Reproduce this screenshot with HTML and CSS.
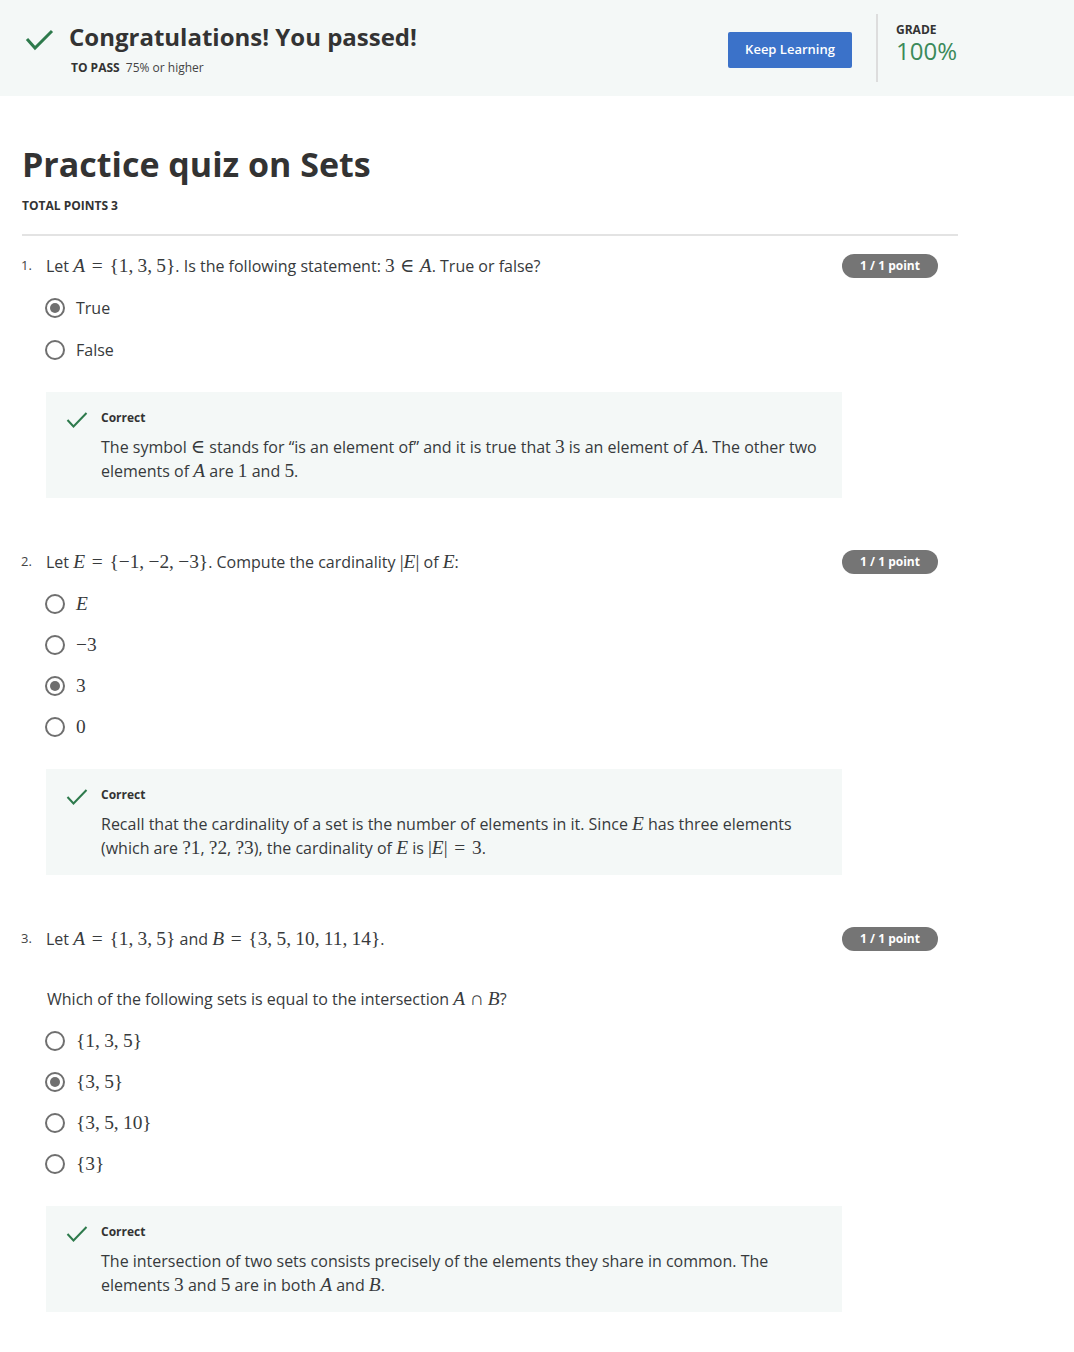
FILE: index.html
```html
<!DOCTYPE html>
<html>
<head>
<meta charset="utf-8">
<link rel="stylesheet" href="styles.css">
</head>
<body>
<header class="banner">
  <div class="banner-left">
    <svg class="big-check" width="30" height="24" viewBox="0 0 30 24"><path d="M2 11 L10 20 L27 3" fill="none" stroke="#2d7a4c" stroke-width="3"/></svg>
    <div>
      <h1 class="banner-title">Congratulations! You passed!</h1>
      <div class="topass"><b>TO PASS</b> 75% or higher</div>
    </div>
  </div>
  <div class="banner-right">
    <button class="keep">Keep Learning</button>
    <div class="vdiv"></div>
    <div class="grade">
      <div class="grade-label">GRADE</div>
      <div class="grade-value">100%</div>
    </div>
  </div>
</header>

<main class="page">
  <h2 class="quiz-title">Practice quiz on Sets</h2>
  <div class="total">TOTAL POINTS 3</div>
  <hr class="rule">

  <section class="q">
    <div class="q-head">
      <span class="q-num">1.</span>
      <div class="q-text">Let <span class="m"><i>A</i><span class="rel">=</span>{1,<span class="th"></span>3,<span class="th"></span>5}</span>. Is the following statement: <span class="m">3<span class="rel">∈</span><i>A</i></span>. True or false?</div>
      <span class="badge">1 / 1 point</span>
    </div>
    <div class="opts">
      <div class="opt"><span class="radio on"></span><span>True</span></div>
      <div class="opt"><span class="radio"></span><span>False</span></div>
    </div>
    <div class="fb">
      <svg class="fb-check" width="22" height="16" viewBox="0 0 22 16"><path d="M1.5 8 L7.5 14.5 L20.5 1" fill="none" stroke="#2d7a4c" stroke-width="2"/></svg>
      <div>
        <div class="fb-title">Correct</div>
        <div class="fb-text">The symbol <span class="m">∈</span> stands for “is an element of” and it is true that <span class="m">3</span> is an element of <span class="m"><i>A</i></span>. The other two elements of <span class="m"><i>A</i></span> are <span class="m">1</span> and <span class="m">5</span>.</div>
      </div>
    </div>
  </section>

  <section class="q">
    <div class="q-head">
      <span class="q-num">2.</span>
      <div class="q-text">Let <span class="m"><i>E</i><span class="rel">=</span>{−1,<span class="th"></span>−2,<span class="th"></span>−3}</span>. Compute the cardinality <span class="m">|<i>E</i>|</span> of <span class="m"><i>E</i></span>:</div>
      <span class="badge">1 / 1 point</span>
    </div>
    <div class="opts tight">
      <div class="opt"><span class="radio"></span><span class="m"><i>E</i></span></div>
      <div class="opt"><span class="radio"></span><span class="m">−3</span></div>
      <div class="opt"><span class="radio on"></span><span class="m">3</span></div>
      <div class="opt"><span class="radio"></span><span class="m">0</span></div>
    </div>
    <div class="fb">
      <svg class="fb-check" width="22" height="16" viewBox="0 0 22 16"><path d="M1.5 8 L7.5 14.5 L20.5 1" fill="none" stroke="#2d7a4c" stroke-width="2"/></svg>
      <div>
        <div class="fb-title">Correct</div>
        <div class="fb-text">Recall that the cardinality of a set is the number of elements in it. Since <span class="m"><i>E</i></span> has three elements (which are <span class="m">?1</span>, <span class="m">?2</span>, <span class="m">?3</span>), the cardinality of <span class="m"><i>E</i></span> is <span class="m">|<i>E</i>|<span class="rel">=</span>3</span>.</div>
      </div>
    </div>
  </section>

  <section class="q">
    <div class="q-head">
      <span class="q-num">3.</span>
      <div class="q-text">Let <span class="m"><i>A</i><span class="rel">=</span>{1,<span class="th"></span>3,<span class="th"></span>5}</span> and <span class="m"><i>B</i><span class="rel">=</span>{3,<span class="th"></span>5,<span class="th"></span>10,<span class="th"></span>11,<span class="th"></span>14}</span>.</div>
      <span class="badge">1 / 1 point</span>
    </div>
    <div class="q-sub">Which of the following sets is equal to the intersection <span class="m"><i>A</i><span class="bin">∩</span><i>B</i></span>?</div>
    <div class="opts tight">
      <div class="opt"><span class="radio"></span><span class="m">{1,<span class="th"></span>3,<span class="th"></span>5}</span></div>
      <div class="opt"><span class="radio on"></span><span class="m">{3,<span class="th"></span>5}</span></div>
      <div class="opt"><span class="radio"></span><span class="m">{3,<span class="th"></span>5,<span class="th"></span>10}</span></div>
      <div class="opt"><span class="radio"></span><span class="m">{3}</span></div>
    </div>
    <div class="fb">
      <svg class="fb-check" width="22" height="16" viewBox="0 0 22 16"><path d="M1.5 8 L7.5 14.5 L20.5 1" fill="none" stroke="#2d7a4c" stroke-width="2"/></svg>
      <div>
        <div class="fb-title">Correct</div>
        <div class="fb-text">The intersection of two sets consists precisely of the elements they share in common. The elements <span class="m">3</span> and <span class="m">5</span> are in both <span class="m"><i>A</i></span> and <span class="m"><i>B</i></span>.</div>
      </div>
    </div>
  </section>
</main>
</body>
</html>
```

FILE: styles.css
```css
* { box-sizing: border-box; }
body {
  margin: 0;
  font-family: "Open Sans", "Liberation Sans", sans-serif;
  color: #373a3c;
  background: #fff;
}
.banner {
  height: 96px;
  background: #f4f8f7;
  display: flex;
  justify-content: space-between;
  align-items: flex-start;
}
.banner-left {
  display: flex;
  align-items: flex-start;
  padding: 21px 0 0 25px;
}
.big-check { margin: 7px 14px 0 0; flex: none; }
.banner-title {
  margin: 0;
  font-size: 24px;
  line-height: 32px;
  font-weight: 700;
  color: #333;
}
.topass {
  margin-top: 7px;
  font-size: 12px;
  line-height: 16px;
  color: #444;
  padding-left: 2px;
}
.topass b { font-weight: 700; color: #333; margin-right: 3px; }
.banner-right {
  display: flex;
  align-items: flex-start;
  width: 346px;
  padding-top: 14px;
}
.keep {
  margin-top: 18px;
  width: 124px;
  height: 36px;
  background: #3b72c9;
  border: none;
  border-radius: 2px;
  color: #fff;
  font-family: "Open Sans", "Liberation Sans", sans-serif;
  font-size: 13px;
  font-weight: 600;
  padding: 0 0 2px;
}
.vdiv {
  width: 2px;
  height: 68px;
  background: #ddd;
  margin-left: 24px;
}
.grade { margin-left: 18px; padding-top: 8px; }
.grade-label {
  font-size: 12px;
  font-weight: 700;
  line-height: 16px;
  color: #333;
}
.grade-value {
  font-size: 24px;
  line-height: 28px;
  color: #3b8a5a;
  font-weight: 400;
  margin-top: -1px;
}
.page { padding: 0 116px 30px 22px; }
.quiz-title {
  margin: 46px 0 0;
  font-size: 34px;
  line-height: 44px;
  font-weight: 700;
  color: #333;
}
.total {
  margin-top: 12px;
  font-size: 12px;
  line-height: 16px;
  font-weight: 700;
  color: #333;
}
.rule {
  border: none;
  height: 2px;
  background: #e3e3e3;
  margin: 20px 0 0;
}
.q { padding-top: 18px; margin-bottom: 34px; }
.q:last-of-type { margin-bottom: 0; }
.q-head {
  display: flex;
  align-items: flex-start;
  padding-right: 20px;
}
.q-num {
  width: 25px;
  font-size: 13px;
  line-height: 22px;
  color: #444;
  margin-left: -1px;
}
.q-text {
  flex: 1;
  font-size: 16px;
  line-height: 24px;
  color: #373a3c;
}
.q-sub {
  margin: 36px 0 0 25px;
  font-size: 16px;
  line-height: 24px;
}
.m {
  font-family: "Liberation Serif", "DejaVu Serif", serif;
  font-size: 19.4px;
  line-height: 1;
}
.m i { font-style: italic; }
.rel {
  display: inline-block;
  min-width: 0.7em;
  text-align: center;
  margin: 0 0.2777em;
}
.bin { margin: 0 0.2222em; }
.th { display: inline-block; width: 0.22em; }
.badge {
  flex: none;
  height: 24px;
  border-radius: 12px;
  background: #757575;
  color: #fff;
  font-size: 12px;
  font-weight: 700;
  line-height: 24px;
  width: 96px;
  text-align: center;
  margin-top: 0;
}
.opts { margin: 18px 0 0 23px; display: flex; flex-direction: column; gap: 18px; }
.opts.tight { gap: 17px; }
.opt {
  display: flex;
  align-items: center;
  gap: 11px;
  height: 24px;
  font-size: 16px;
  color: #373a3c;
}
.radio {
  width: 20px;
  height: 20px;
  border: 2px solid #6f6f6f;
  border-radius: 50%;
  display: flex;
  align-items: center;
  justify-content: center;
  flex: none;
}
.radio.on::after {
  content: "";
  width: 10px;
  height: 10px;
  border-radius: 50%;
  background: #6f6f6f;
}
.fb {
  margin: 30px 0 0 24px;
  width: 796px;
  background: #f4f8f7;
  display: flex;
  padding: 17px 20px 15px 20px;
  min-height: 106px;
}
.fb-check { flex: none; margin: 3px 13px 0 0; }
.fb-title {
  font-size: 12px;
  font-weight: 700;
  line-height: 18px;
  color: #333;
}
.fb-text {
  margin-top: 8px;
  font-size: 16px;
  line-height: 24px;
  color: #373a3c;
}
```
